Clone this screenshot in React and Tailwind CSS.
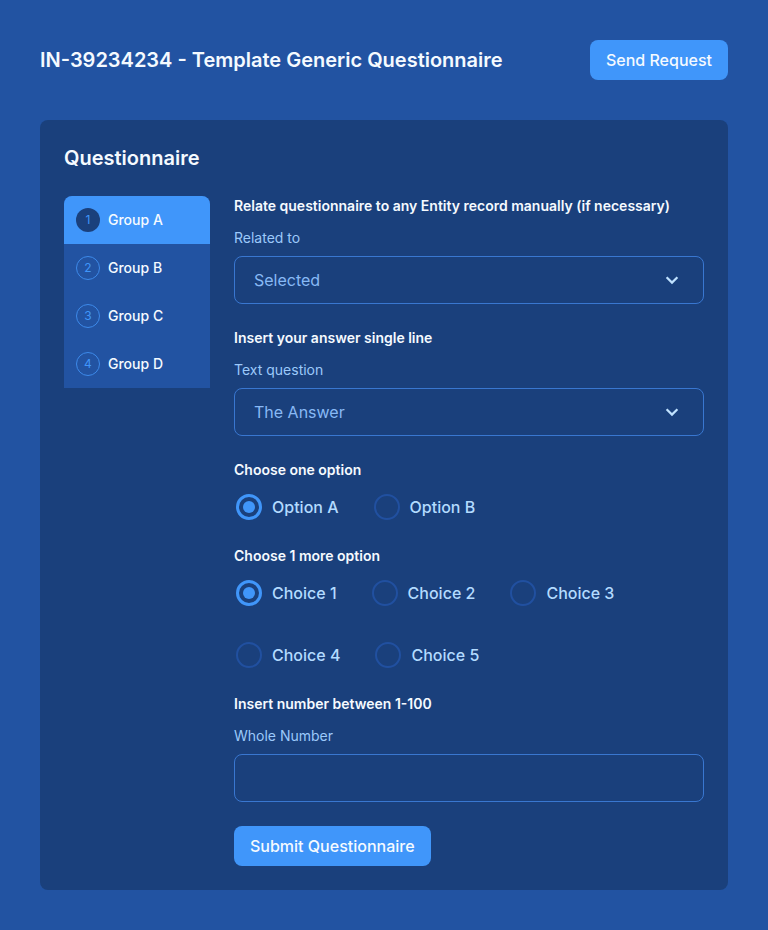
import { useState } from "react";

const groups = ["Group A", "Group B", "Group C", "Group D"];

function Heading({ children, ...props }) {
  return (
    <h3 className="text-sm leading-5 font-semibold text-[#f5faff]" {...props}>
      {children}
    </h3>
  );
}

function SelectField({ id, title, label, options }) {
  return (
    <section>
      <Heading>{title}</Heading>
      <label htmlFor={id} className="mt-3 block text-sm leading-5 text-[#9cc9fa]">
        {label}
      </label>
      <div className="relative mt-2">
        <select
          id={id}
          className="h-12 w-full appearance-none rounded-lg border border-[#3977d0] bg-transparent px-[19px] text-base text-[#88b9f5] outline-none"
        >
          {options.map((o) => (
            <option key={o}>{o}</option>
          ))}
        </select>
        <svg
          className="pointer-events-none absolute top-4 right-6 size-4"
          viewBox="0 0 16 16"
          fill="none"
          stroke="#c0e2ff"
          strokeWidth="2.2"
          aria-hidden="true"
        >
          <path d="M2.6 5.2 8 10.6 13.4 5.2" />
        </svg>
      </div>
    </section>
  );
}

function Radio({ name, label, checked, onChange }) {
  return (
    <label className="flex h-[30px] items-center gap-2 text-base font-medium text-[#b3dbff]">
      <span className="grid size-[30px] place-items-center">
        <input
          type="radio"
          name={name}
          checked={checked}
          onChange={onChange}
          className="grid size-[26px] appearance-none place-items-center rounded-full border-2 border-[#2150a0] before:size-3 before:rounded-full checked:border-[3px] checked:border-[#4096fa] checked:before:bg-[#4096fa]"
        />
      </span>
      {label}
    </label>
  );
}

function RadioGroup({ name, title, options }) {
  const [value, setValue] = useState(options[0]);
  return (
    <section role="radiogroup" aria-labelledby={name + "-title"}>
      <Heading id={name + "-title"}>{title}</Heading>
      <div className="mt-3 flex flex-wrap gap-x-[33px] gap-y-8">
        {options.map((o) => (
          <Radio key={o} name={name} label={o} checked={value === o} onChange={() => setValue(o)} />
        ))}
      </div>
    </section>
  );
}

export default function App() {
  const [active, setActive] = useState(0);
  return (
    <div className="min-h-screen bg-[#2253a2] p-10 font-['Inter',sans-serif]">
      <header className="flex items-center justify-between gap-4">
        <h1 className="text-xl font-semibold text-[#f5faff]">IN-39234234 - Template Generic Questionnaire</h1>
        <button className="h-10 shrink-0 rounded-lg bg-[#4096fa] px-4 text-base font-medium text-[#f5faff]">
          Send Request
        </button>
      </header>
      <main className="mt-10 rounded-lg bg-[#1a407c] p-6">
        <h2 className="text-xl leading-7 font-semibold text-[#f5faff]">Questionnaire</h2>
        <div className="mt-6 flex items-start gap-6">
          <nav className="w-[146px] shrink-0 overflow-hidden rounded-t-lg bg-[#2253a2]">
            {groups.map((g, i) => (
              <button
                key={g}
                onClick={() => setActive(i)}
                className={
                  "flex h-12 w-full items-center gap-2 px-3 text-sm font-medium text-[#f5faff] " +
                  (active === i ? "bg-[#4096fa]" : "")
                }
              >
                <span
                  className={
                    "grid size-6 place-items-center rounded-full text-xs font-normal text-[#4096fa] " +
                    (active === i ? "bg-[#1a407c]" : "border border-[#3d8aea]")
                  }
                >
                  {i + 1}
                </span>
                {g}
              </button>
            ))}
          </nav>
          <form className="flex min-w-0 flex-1 flex-col gap-6" onSubmit={(e) => e.preventDefault()}>
            <SelectField
              id="related"
              title="Relate questionnaire to any Entity record manually (if necessary)"
              label="Related to"
              options={["Selected"]}
            />
            <SelectField
              id="answer"
              title="Insert your answer single line"
              label="Text question"
              options={["The Answer"]}
            />
            <RadioGroup name="option" title="Choose one option" options={["Option A", "Option B"]} />
            <RadioGroup
              name="choice"
              title="Choose 1 more option"
              options={["Choice 1", "Choice 2", "Choice 3", "Choice 4", "Choice 5"]}
            />
            <section>
              <Heading>Insert number between 1-100</Heading>
              <label htmlFor="whole" className="mt-3 block text-sm leading-5 text-[#9cc9fa]">
                Whole Number
              </label>
              <input
                id="whole"
                type="text"
                inputMode="numeric"
                className="mt-2 block h-12 w-full rounded-lg border border-[#3977d0] bg-transparent px-[19px] text-base text-[#88b9f5] outline-none"
              />
            </section>
            <button className="h-10 self-start rounded-lg bg-[#4096fa] px-4 text-base font-medium text-[#f5faff]">
              Submit Questionnaire
            </button>
          </form>
        </div>
      </main>
    </div>
  );
}
